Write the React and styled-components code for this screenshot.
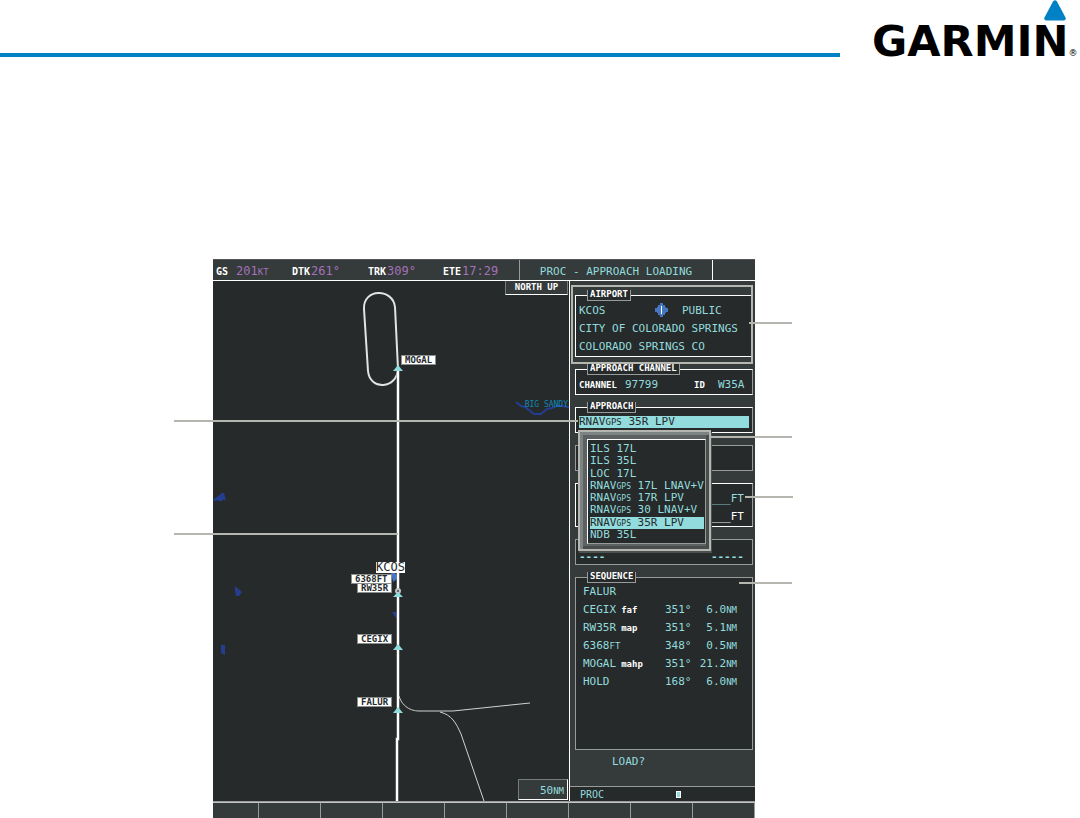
import { useState } from 'react'
import styled, { createGlobalStyle } from 'styled-components'

const approaches = [
  { type: 'ILS', name: '17L' },
  { type: 'ILS', name: '35L' },
  { type: 'LOC', name: '17L' },
  { type: 'RNAV', sub: 'GPS', name: '17L LNAV+V' },
  { type: 'RNAV', sub: 'GPS', name: '17R LPV' },
  { type: 'RNAV', sub: 'GPS', name: '30 LNAV+V' },
  { type: 'RNAV', sub: 'GPS', name: '35R LPV' },
  { type: 'NDB', name: '35L' },
]

const legs = [
  { fix: 'FALUR' },
  { fix: 'CEGIX', role: 'faf', course: '351°', distance: '6.0' },
  { fix: 'RW35R', role: 'map', course: '351°', distance: '5.1' },
  { fix: '6368', unit: 'FT', course: '348°', distance: '0.5' },
  { fix: 'MOGAL', role: 'mahp', course: '351°', distance: '21.2' },
  { fix: 'HOLD', course: '168°', distance: '6.0' },
]

const waypoints = [
  { name: '6368FT', x: 138, y: 293 },
  { name: 'MOGAL', x: 188, y: 74 },
  { name: 'RW35R', x: 144, y: 302 },
  { name: 'CEGIX', x: 144, y: 353 },
  { name: 'FALUR', x: 144, y: 416 },
]

const softkeys = [1, 2, 3, 4, 5, 6, 7, 8, 9]

const App = () => {
  const [selected, setSelected] = useState(6)
  const current = approaches[selected]

  return (
    <Page>
      <GlobalStyle />
      <Header>
        <Rule />
        <Logo>
          GARMIN<sup>®</sup>
          <svg width="22" height="21" viewBox="0 0 22 21">
            <path d="M9 1.5Q11-1 13 1.5L21.5 17.5Q22.500 20.500 19.500 20.500H2.500Q-.5 20.500 .5 17.500Z" fill="#0081c6" />
          </svg>
        </Logo>
      </Header>

      <Figure>
        <Display>
          <TopBar>
            <Nav>
              <Reading $width="76px"><b>GS</b><Gap />201<small>KT</small></Reading>
              <Reading $width="76px"><b>DTK</b>261°</Reading>
              <Reading $width="75px"><b>TRK</b>309°</Reading>
              <Reading $width="70px"><b>ETE</b>17:29</Reading>
            </Nav>
            <Title>PROC - APPROACH LOADING</Title>
            <Spare />
          </TopBar>

          <Body>
            <Map>
              <MapDrawing />
              {waypoints.map((point) => (
                <Waypoint key={point.name} style={{ left: point.x, top: point.y }}>{point.name}</Waypoint>
              ))}
              <AirportLabel>KCOS</AirportLabel>
              <River>BIG SANDY</River>
              <NorthUp>NORTH UP</NorthUp>
              <Range>50<small>NM</small></Range>
            </Map>

            <Panel>
              <Group>
                <GroupTitle>AIRPORT</GroupTitle>
                <Row>
                  <Cell $width="76px">KCOS</Cell>
                  <Cell $width="27px">
                    <svg width="13" height="14" viewBox="0 0 13 14">
                      <path d="M5 0h3v2h2v2h1v1h2v4h-2v1h-1v2h-2v2h-3v-2h-2v-2h-1v-1h-2v-4h2v-1h1v-2h2z" fill="#4377c2" />
                      <path d="M6.500 3v8" stroke="#fff" />
                    </svg>
                  </Cell>
                  <Cell>PUBLIC</Cell>
                </Row>
                <Row>CITY OF COLORADO SPRINGS</Row>
                <Row>COLORADO SPRINGS CO</Row>
              </Group>

              <Group>
                <GroupTitle>APPROACH CHANNEL</GroupTitle>
                <Row>
                  <Cell $width="46px"><Caption>CHANNEL</Caption></Cell>
                  <Cell $width="69px">97799</Cell>
                  <Cell $width="24px"><Caption>ID</Caption></Cell>
                  <Cell>W35A</Cell>
                </Row>
              </Group>

              <Group>
                <GroupTitle>APPROACH</GroupTitle>
                <Row>
                  <Field type="button" aria-haspopup="listbox" aria-expanded="true">
                    {current.type}<small>{current.sub}</small> {current.name}
                  </Field>
                </Row>
                <Menu>
                  <MenuList role="listbox" aria-label="Approach">
                    {approaches.map((item, i) => (
                      <Option
                        key={i}
                        type="button"
                        role="option"
                        aria-selected={i === selected}
                        $active={i === selected}
                        onClick={() => setSelected(i)}
                      >
                        {item.type}<small>{item.sub}</small> {item.name}
                      </Option>
                    ))}
                  </MenuList>
                </Menu>
              </Group>

              <Group $dim $untitled><Row /></Group>

              <Group $untitled>
                <Row $end>___FT</Row>
                <Row $end $white>___FT</Row>
              </Group>

              <Group $dim $untitled>
                <Row $spread><b>----</b><b>-----</b></Row>
              </Group>

              <Group $grow $dim>
                <GroupTitle>SEQUENCE</GroupTitle>
                <Legs>
                  <tbody>
                    {legs.map((leg) => (
                      <tr key={leg.fix}>
                        <td>{leg.fix}{leg.unit && <small>{leg.unit}</small>}{leg.role && <Role>{leg.role}</Role>}</td>
                        <td>{leg.course}</td>
                        <td>{leg.distance}{leg.distance && <small>NM</small>}</td>
                      </tr>
                    ))}
                  </tbody>
                </Legs>
              </Group>

              <Load type="button">LOAD?</Load>
              <PageBar>
                <span>PROC</span>
                <PageMark />
              </PageBar>
              <AirportOutline />
            </Panel>
          </Body>

          <Softkeys>
            {softkeys.map((key) => <Softkey key={key} type="button" aria-label={`Softkey ${key}`} />)}
          </Softkeys>

          <Leader $left="-39px" $top="161px" $width="404px" />
          <Leader $left="-39px" $top="274px" $width="224px" />
          <Leader $left="536px" $top="63px" $width="43px" />
          <Leader $left="497px" $top="177px" $width="82px" />
          <Leader $left="532px" $top="237px" $width="48px" />
          <Leader $left="526px" $top="323px" $width="53px" />
        </Display>
      </Figure>
    </Page>
  )
}

const MapDrawing = () => (
  <Chart viewBox="0 0 356 520" width="356" height="520" fill="none">
    <g fill="#253d8f">
      <path d="M0 219l9-7h2l2 7h-4v1h-4v-1l-4 1z" />
      <path d="M22 305l7 6-3 4h-3l-1-5z" />
      <path d="M8 364h4v10l-4-2z" />
      <path d="M179 331h6v7l-3-2z" />
    </g>
    <path d="M303 121l5 4 4 1 9 7h7l6-5 5-1 5-2h6l4 1h3" stroke="#253d8f" strokeWidth="2" />
    <path d="M178 291h3l3 3v4l-4 3z" fill="#4377c2" />
    <path d="M185 88L182 26C180 7 150 7 151 28L155 90C157 110 184 108 185 88Z" stroke="#e2e3e2" strokeWidth="2" />
    <path d="M185 88V458H184V520" stroke="#8c8e8e" strokeWidth="3" />
    <path d="M185 88V458H184V520" stroke="#fff" strokeWidth="2" />
    <path d="M186 415C190 428 201 430 206 430H240L317 422" stroke="#d0d2d2" />
    <path d="M227 431C239 434 243 442 248 453L271 520" stroke="#d0d2d2" />
    <circle cx="185" cy="310" r="2" stroke="#c4c5c4" strokeWidth="2" fill="#444" />
    <g fill="#8fdcdd">
      <path d="M180 90l5-6 5 6z" />
      <path d="M180 316l5-5 5 5z" />
      <path d="M180 369l5-6 5 6z" />
      <path d="M180 432l5-6 5 6z" />
    </g>
  </Chart>
)

const cyan = '#93dcdd'
const dark = '#262a2b'
const slate = '#353a3b'
const grey = '#979b9a'

const GlobalStyle = createGlobalStyle`
  * {
    box-sizing: border-box;
  }
  body {
    margin: 0;
    background: #fff;
    font-family: "DejaVu Sans Mono", monospace;
  }
  button {
    font: inherit;
    color: inherit;
    text-align: left;
    border: 0;
    padding: 0;
    background: none;
  }
`

const Page = styled.div`
  overflow: hidden;
`

const Header = styled.header`
  display: flex;
  height: 59px;
`

const Rule = styled.div`
  flex: 1;
  height: 4px;
  margin: 53px 32px 0 0;
  background: #0081c6;
`

const Logo = styled.div`
  position: relative;
  width: 208px;
  padding-top: 25px;
  font: bold 43px/32px "DejaVu Sans", sans-serif;
  color: #000;
  white-space: nowrap;

  sup {
    font-size: 9px;
    line-height: 9px;
    font-weight: 400;
    vertical-align: baseline;
  }
  svg {
    position: absolute;
    top: 0;
    right: 14px;
  }
`

const Figure = styled.main`
  display: grid;
  grid-template-columns: 213fr 542fr 325fr;
  margin-top: 200px;
`

const Display = styled.div`
  grid-column: 2;
  position: relative;
  background: ${slate};
  color: ${cyan};
  font-size: 11px;

  small {
    font-size: 9px;
    line-height: 9px;
  }
`

const TopBar = styled.div`
  display: flex;
  height: 22px;
  line-height: 23px;
  border-top: 1px solid #555;
  border-bottom: 1px solid #fff;
`

const Nav = styled.div`
  display: flex;
  flex: 1;
  padding-left: 3px;
`

const Reading = styled.span`
  width: ${(p) => p.$width};
  font-size: 12px;
  color: #a472b8;
  white-space: nowrap;

  b {
    font-size: 10px;
    color: #fff;
    margin-right: 1px;
  }
`

const Gap = styled.span`
  display: inline-block;
  width: 7px;
`

const Title = styled.div`
  width: 194px;
  text-align: center;
  border-left: 1px solid ${grey};
  border-right: 1px solid #fff;
`

const Spare = styled.div`
  width: 42px;
`

const Body = styled.div`
  display: flex;
`

const Map = styled.div`
  position: relative;
  flex: 1;
  background: ${dark};
`

const Chart = styled.svg`
  display: block;
`

const Waypoint = styled.span`
  position: absolute;
  padding: 0 3px;
  border: 1px solid #8c8e8e;
  background: #fff;
  color: #262a2b;
  font-size: 9px;
  font-weight: bold;
  line-height: 8px;
`

const AirportLabel = styled.span`
  position: absolute;
  left: 163px;
  top: 281px;
  background: #fff;
  color: #262a2b;
  font-size: 12px;
  line-height: 11px;
`

const River = styled.span`
  position: absolute;
  right: 1px;
  top: 118px;
  color: #1187b5;
  font-size: 8px;
  line-height: 11px;
`

const NorthUp = styled.div`
  position: absolute;
  right: 1px;
  top: 0;
  width: 63px;
  line-height: 13px;
  text-align: center;
  color: #fff;
  font-size: 9px;
  font-weight: bold;
  background: ${slate};
  border: 1px solid #777b7b;
  border-top: 0;
  border-bottom-color: #fff;
`

const Range = styled.div`
  position: absolute;
  right: 1px;
  bottom: 1px;
  width: 50px;
  padding: 2px 3px 0 0;
  line-height: 17px;
  text-align: right;
  background: ${slate};
  border: 1px solid #777b7b;
  border-bottom-color: #fff;
  border-right-color: #fff;
`

const Panel = styled.div`
  position: relative;
  display: flex;
  flex-direction: column;
  gap: 12px;
  width: 186px;
  height: 520px;
  padding: 14px 2px 0 5px;
  border-left: 1px solid #fff;
`

const Group = styled.section`
  position: relative;
  flex: ${(p) => (p.$grow ? 1 : 'none')};
  padding: ${(p) => (p.$untitled ? 5 : 0)}px 3px 1px;
  background: ${dark};
  border: 1px solid ${(p) => (p.$dim ? grey : '#fff')};
  border-right-color: ${grey};
`

const GroupTitle = styled.h3`
  position: relative;
  width: fit-content;
  height: 11px;
  margin: -6px 0 0 8px;
  padding: 0 2px;
  font-size: 9px;
  line-height: 9px;
  color: #fff;
  background: ${dark};
  border: 1px solid ${grey};
  border-top: 0;
`

const Row = styled.div`
  display: flex;
  align-items: center;
  justify-content: ${(p) => (p.$spread ? 'space-between' : p.$end ? 'flex-end' : 'flex-start')};
  height: 18px;
  padding-right: ${(p) => (p.$spread || p.$end ? 5 : 0)}px;
  color: ${(p) => (p.$white ? '#fff' : cyan)};
  white-space: nowrap;

  > b {
    align-self: flex-end;
    line-height: 13px;
  }
`

const Cell = styled.span`
  width: ${(p) => p.$width || 'auto'};

  svg {
    display: block;
  }
`

const Caption = styled.span`
  font-size: 9px;
  font-weight: bold;
  color: #fff;
`

const Field = styled.button`
  flex: 1;
  height: 12px;
  line-height: 12px;
  color: ${dark};
  background: ${cyan};
`

/* drops over the groups below the field */
const Menu = styled.div`
  position: absolute;
  z-index: 1;
  left: 2px;
  top: 22px;
  width: 133px;
  padding: 2px;
  background: #5c6262;
  border: 2px solid #b6b6b1;
  box-shadow: inset 3px 3px 0 #7d8383, inset -3px -3px 0 #484e4e, 1px 2px 0 #4c5050;
`

const MenuList = styled.div`
  display: flex;
  flex-direction: column;
  justify-content: space-between;
  height: 105px;
  margin: 5px 1px 3px 5px;
  padding: 3px 1px 2px 2px;
  background: ${dark};
  border: 1px solid ${grey};
  border-top-color: #fff;
  border-left-color: #fff;
`

const Option = styled.button`
  line-height: 12px;
  height: 12px;
  white-space: nowrap;
  color: ${(p) => (p.$active ? dark : cyan)};
  background: ${(p) => (p.$active ? cyan : 'none')};

  small {
    font-size: 8px;
  }
`

const Legs = styled.table`
  width: 100%;
  border-collapse: collapse;

  tr {
    height: 18px;
  }
  td {
    padding: 0;
    line-height: 16px;
    white-space: nowrap;
  }
  td:first-child {
    padding-left: 4px;
  }
  td:nth-child(2) {
    width: 28px;
  }
  td:last-child {
    width: 56px;
    padding-right: 12px;
    text-align: right;
  }
`

const Role = styled.span`
  margin-left: 5px;
  font-size: 9px;
  line-height: 9px;
  font-weight: bold;
  color: #fff;
`

const Load = styled.button`
  align-self: flex-start;
  height: 13px;
  margin: -7px 0 6px 37px;
  line-height: 13px;
`

const PageBar = styled.div`
  display: flex;
  align-items: center;
  gap: 72px;
  height: 15px;
  margin: 0 -2px 0 -5px;
  padding-left: 10px;
  font-size: 10px;
  background: ${dark};
  border-top: 1px solid ${grey};
`

const PageMark = styled.i`
  width: 5px;
  height: 7px;
  background: ${cyan};
  border: 1px solid #fff;
`

const AirportOutline = styled.div`
  position: absolute;
  top: 4px;
  left: 1px;
  right: 2px;
  height: 79px;
  border: 2px solid #b6b6b1;
`

const Softkeys = styled.div`
  display: grid;
  grid-template-columns: 46fr repeat(8, 62fr);
  height: 17px;
  border-top: 1px solid ${grey};
`

const Softkey = styled.button`
  border-top: 1px solid #c4c7c6;
  border-right: 1px solid ${grey};
`

const Leader = styled.div`
  position: absolute;
  z-index: 2;
  left: ${(p) => p.$left};
  top: ${(p) => p.$top};
  width: ${(p) => p.$width};
  height: 2px;
  background: #b6b6b1;
`

export default App
